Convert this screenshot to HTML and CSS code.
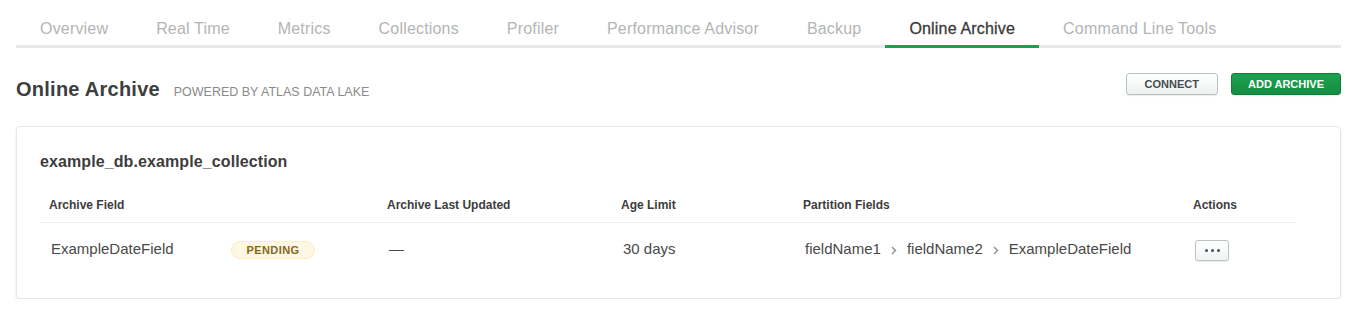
FILE: index.html
```html
<!DOCTYPE html>
<html lang="en">
<head>
  <meta charset="UTF-8">
  <title>Online Archive</title>
  <link rel="stylesheet" href="styles.css">
</head>
<body>

  <div class="page">
    <!-- Tabs -->
    <nav class="tabs">
      <a class="tab">Overview</a>
      <a class="tab">Real Time</a>
      <a class="tab">Metrics</a>
      <a class="tab">Collections</a>
      <a class="tab">Profiler</a>
      <a class="tab">Performance Advisor</a>
      <a class="tab">Backup</a>
      <a class="tab active">Online Archive</a>
      <a class="tab">Command Line Tools</a>
    </nav>

    <!-- Header -->
    <div class="head">
      <h1 class="title">Online Archive <span class="sub">Powered by Atlas Data Lake</span></h1>
      <div class="btns">
        <button class="btn">Connect</button>
        <button class="btn primary">Add Archive</button>
      </div>
    </div>

    <!-- Archive card -->
    <div class="card">
      <h3 class="coll">example_db.example_collection</h3>
      <table class="tbl">
        <colgroup>
          <col style="width:182px">
          <col style="width:156px">
          <col style="width:234px">
          <col style="width:182px">
          <col style="width:390px">
          <col style="width:112px">
        </colgroup>
        <thead>
          <tr>
            <th colspan="2">Archive Field</th>
            <th>Archive Last Updated</th>
            <th>Age Limit</th>
            <th>Partition Fields</th>
            <th>Actions</th>
          </tr>
        </thead>
        <tbody>
          <tr>
            <td>ExampleDateField</td>
            <td><span class="badge">Pending</span></td>
            <td>—</td>
            <td>30 days</td>
            <td>
              <span class="crumbs">
                fieldName1
                <svg class="chev" width="6" height="9" viewBox="0 0 6 9"><path d="M1 1l3.5 3.5L1 8" fill="none" stroke="#8f999c" stroke-width="1.5"/></svg>
                fieldName2
                <svg class="chev" width="6" height="9" viewBox="0 0 6 9"><path d="M1 1l3.5 3.5L1 8" fill="none" stroke="#8f999c" stroke-width="1.5"/></svg>
                ExampleDateField
              </span>
            </td>
            <td><button class="more"><span></span><span></span><span></span></button></td>
          </tr>
        </tbody>
      </table>
    </div>
  </div>

</body>
</html>
```

FILE: styles.css
```css
body { margin: 0; font-family: "Liberation Sans", Arial, sans-serif; color: #464646; background: #fff; }
.page { width: 1325px; margin-left: 16px; }

.tabs { display: flex; border-bottom: 3px solid #e7e9e9; }
.tab { padding: 19px 24px 6px; line-height: 20px; font-size: 16px; letter-spacing: 0.18px; color: #b3b5b5; margin-bottom: -3px; border-bottom: 3px solid transparent; }
.tab.active { color: #3a3a3a; border-bottom-color: #1f9f4c; -webkit-text-stroke: 0.3px #3a3a3a; }

.head { display: flex; justify-content: space-between; align-items: flex-start; padding-top: 25px; }
.title { margin: 0; font-size: 20px; line-height: 32px; font-weight: bold; color: #3d3d3d; letter-spacing: 0.25px; }
.sub { font-size: 12.5px; font-weight: normal; color: #8a8a8a; text-transform: uppercase; letter-spacing: 0; margin-left: 8px; }
.btns { display: flex; gap: 13px; }
.btn { height: 22px; padding: 0 18px; font-family: inherit; font-size: 11px; font-weight: bold; text-transform: uppercase; color: #464c4f; border: 1px solid #b8c4c2; border-radius: 3px; background: linear-gradient(#fff, #eef1f1); box-shadow: 0 1px 1px rgba(0,0,0,0.08); }
.btn.primary { width: 110px; padding: 0; color: #fff; border-color: #0f7d39; background: linear-gradient(#1ea351, #148c41); }

.card { margin-top: 18px; border: 1px solid #e3e8e7; border-radius: 4px; box-shadow: 0 2px 3px rgba(0,0,0,0.09); padding: 25px 44px 23px 23px; }
.coll { margin: 0; font-size: 16px; line-height: 20px; font-weight: bold; color: #3d3d3d; letter-spacing: 0.1px; }

.tbl { margin-top: 17px; border-collapse: collapse; table-layout: fixed; width: 1256px; }
.tbl th { text-align: left; font-size: 12px; line-height: 16px; font-weight: bold; color: #3d3d3d; padding: 8px 0 9px 9px; border-bottom: 1px solid #e7eeec; }
.tbl td { font-size: 15px; line-height: 20px; height: 52px; padding: 0 0 0 11px; vertical-align: middle; color: #494949; }
.tbl td:nth-child(2) { padding-left: 9px; }

.badge { display: inline-block; width: 82px; height: 16px; line-height: 16px; text-align: center; border: 1px solid #fdeebf; border-radius: 9px; background: #fef7e3; color: #86681d; font-size: 11px; font-weight: bold; text-transform: uppercase; letter-spacing: 0.4px; }

.crumbs { display: inline-flex; align-items: center; gap: 10px; }
.chev { margin-top: 3px; }

.more { width: 34px; height: 21px; display: inline-flex; align-items: center; justify-content: center; gap: 3px; padding: 0; border: 1px solid #b8c4c2; border-radius: 3px; background: linear-gradient(#fff, #f1f4f4); box-shadow: 0 1px 1px rgba(0,0,0,0.08); }
.more span { width: 3px; height: 3px; border-radius: 50%; background: #3d4f58; }
```
